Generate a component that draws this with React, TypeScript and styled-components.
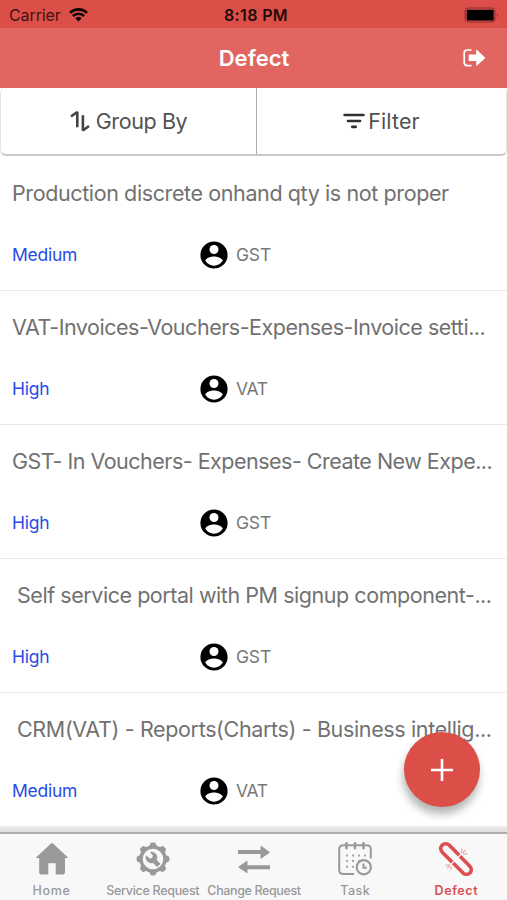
import React from 'react';
import styled, { createGlobalStyle } from 'styled-components';

const GlobalStyle = createGlobalStyle`
  * { box-sizing: border-box; }
  body { margin: 0; background: #fff; font-family: Inter, "Liberation Sans", sans-serif; }
`;

const Screen = styled.div`
  position: relative;
  display: flex;
  flex-direction: column;
  width: 507px;
  height: 900px;
  overflow: hidden;
  background: #fff;
`;

const StatusBar = styled.div`
  display: grid;
  grid-template-columns: 1fr auto 1fr;
  align-items: center;
  flex: none;
  height: 28px;
  padding: 2px 7px 0 9px;
  background: #dc4e48;
  color: #1f0a0a;
  font-size: 16px;
  line-height: 20px;
`;

const Carrier = styled.div`
  display: flex;
  align-items: center;
  gap: 8px;
  color: #3c1414;
  letter-spacing: -0.1px;
`;

const Clock = styled.div`
  padding-left: 3px;
  font-weight: 600;
  letter-spacing: 0.35px;
`;

const Battery = styled.svg`
  justify-self: end;
`;

const Header = styled.header`
  display: grid;
  grid-template-columns: 1fr auto 1fr;
  align-items: center;
  flex: none;
  height: 60px;
  padding: 0 21px;
  background: #e16662;
  color: #fff;
`;

const Title = styled.h1`
  grid-column: 2;
  margin: 0;
  padding-left: 1px;
  font-size: 22px;
  font-weight: 600;
  line-height: 28px;
`;

const IconButton = styled.button`
  justify-self: end;
  display: flex;
  padding: 0;
  border: 0;
  background: none;
  color: #fff;
`;

const Toolbar = styled.div`
  display: grid;
  grid-template-columns: 255px 1fr;
  flex: none;
  height: 68px;
  border: solid #c9c9c9;
  border-width: 0 1px 2px;
  border-color: #e4e4e4 #e4e4e4 #c9c9c9;
  border-radius: 6px;
`;

const ToolButton = styled.button<{ $gap: number; $spacing: number }>`
  display: flex;
  align-items: center;
  justify-content: center;
  gap: ${(p) => p.$gap}px;
  padding: 0;
  border: 0;
  background: none;
  color: #525252;
  font: 400 21.5px/28px Inter, sans-serif;
  letter-spacing: ${(p) => p.$spacing}px;

  & + & {
    border-left: 1.5px solid #adadad;
  }
`;

const List = styled.ul`
  flex: 1;
  min-height: 0;
  margin: 0;
  padding: 1px 0 0;
  overflow: hidden;
  list-style: none;
`;

const Item = styled.li`
  height: 134px;
  padding: 22px 12px 0;
  border-bottom: 1px solid #e9e9e9;
`;

const Summary = styled.div<{ $spacing: number; $indent?: boolean }>`
  padding-left: ${(p) => (p.$indent ? 5 : 0)}px;
  color: #717171;
  font-size: 21.5px;
  line-height: 28px;
  letter-spacing: ${(p) => p.$spacing}px;
  white-space: nowrap;
`;

const Meta = styled.div`
  display: grid;
  grid-template-columns: 188px 1fr;
  align-items: center;
  height: 32px;
  margin-top: 32px;
  font-size: 17.5px;
  line-height: 24px;
`;

const Priority = styled.span`
  color: #2a4be3;
  letter-spacing: -0.25px;
`;

const Owner = styled.span<{ $spacing: number }>`
  display: flex;
  align-items: center;
  gap: 8px;
  color: #777;
  letter-spacing: ${(p) => p.$spacing}px;
`;

const AddButton = styled.button`
  position: absolute;
  left: 404px;
  top: 732px;
  display: flex;
  align-items: center;
  justify-content: center;
  width: 76px;
  height: 75px;
  padding: 0;
  border: 0;
  border-radius: 50%;
  background: #dc4e48;
  box-shadow: -1px 7px 9px rgba(0, 0, 0, 0.3);
`;

const TabBar = styled.nav`
  display: grid;
  grid-template-columns: repeat(5, 1fr);
  flex: none;
  height: 74px;
  padding: 8px 0 0 1px;
  background: linear-gradient(#ececec 0, #e0e0e0 6px, #a9a9a9 6px, #b5b5b5 8px, #f8f8f8 8px);
`;

const Tab = styled.a<{ $active?: boolean; $spacing: number }>`
  display: flex;
  flex-direction: column;
  align-items: center;
  padding-top: 8px;
  color: ${(p) => (p.$active ? '#dc4e50' : '#999')};
  font-size: 12.5px;
  font-weight: ${(p) => (p.$active ? 600 : 500)};
  line-height: 16px;
  letter-spacing: ${(p) => p.$spacing}px;
  white-space: nowrap;

  svg {
    flex: none;
    margin-bottom: 7px;
  }
`;

const WifiIcon = () => (
  <svg width="19" height="14" viewBox="0 0 19 14" fill="none" stroke="#0c0303">
    <path d="M1 4.900a12.200 12.200 0 0 1 17 0" strokeWidth="2.700" />
    <path d="M3.900 8a8 8 0 0 1 11.200 0" strokeWidth="2.500" />
    <path d="M9.500 13.600 6.300 10.300a4.600 4.600 0 0 1 6.400 0Z" fill="#0c0303" stroke="none" />
  </svg>
);

const BatteryIcon = () => (
  <Battery width="36" height="16" viewBox="0 0 36 16">
    <rect x="1" y="1" width="30" height="14" rx="3" fill="none" stroke="#8c302d" />
    <rect x="2.700" y="2.700" width="27" height="10.800" rx="1" fill="#000" />
    <path d="M33 6v4.500q2-2.200 0-4.500" fill="#8c302d" />
  </Battery>
);

const ExitIcon = () => (
  <svg width="23" height="18" viewBox="0 0 23 18">
    <path d="M8.500 1H4.500Q1.200 1 1.200 4v9.500q0 3.200 3.300 3.200h4" fill="none" stroke="#fff" strokeWidth="1.700" />
    <path d="M6.500 5.400h6.700V1.200q0-1 .9-.3l7.700 7.300q.6.600 0 1.200l-7.700 7.200q-.9.600-.9-.3v-4.200H6.500q-.8 0-.8-.8V6.200q0-.8.8-.8" fill="#fff" />
  </svg>
);

const SortIcon = () => (
  <svg width="20" height="22" viewBox="0 0 20 22" fill="none" stroke="#444">
    <path d="M7.300 17.200V2L1 6.500" strokeWidth="2.600" strokeLinejoin="bevel" />
    <path d="M12.900 5.300v15.200L19 16" strokeWidth="2.600" strokeLinejoin="bevel" />
  </svg>
);

const FilterIcon = () => (
  <svg width="22" height="16" viewBox="0 0 22 16" stroke="#303030" strokeWidth="2.700" strokeLinecap="round">
    <path d="M1.600 2h18.800M5 8h12M9.300 13.800h3.400" />
  </svg>
);

const AvatarIcon = () => (
  <svg width="28" height="28" viewBox="0 0 28 28">
    <circle cx="14" cy="14" r="13.600" fill="#000" />
    <circle cx="14" cy="8.500" r="4.500" fill="#fff" />
    <path d="M5.200 19.600C6.500 16.800 11 15.600 14 15.600s7.500 1.200 8.800 4A10.700 10.700 0 0 1 14 24.700a10.700 10.700 0 0 1-8.800-5.100" fill="#fff" />
  </svg>
);

const PlusIcon = () => (
  <svg width="22" height="22" viewBox="0 0 22 22" stroke="#fff" strokeWidth="2.600">
    <path d="M11 0v22M0 11h22" />
  </svg>
);

const HomeIcon = () => (
  <svg width="34" height="34" viewBox="0 0 34 34" fill="#999">
    <path d="M16 1.600q1-.9 2 0l14.700 13.600q.8.900-.4.900H30v14.500q0 1.800-1.800 1.800H20.700V21.300h-7.400v11.100H6q-1.800 0-1.800-1.800V16.100H1.700q-1.200 0-.4-.9Z" />
  </svg>
);

const teeth = [0, 45, 90, 135, 180, 225, 270, 315];

const ServiceIcon = () => (
  <svg width="34" height="34" viewBox="0 0 34 34">
    <circle cx="17" cy="17" r="12" fill="none" stroke="#999" strokeWidth="3.400" />
    {teeth.map((angle) => (
      <path key={angle} d="m12.800 5.200 1.400-3.500q.4-1.100 1.500-1.100h2.600q1.100 0 1.500 1.100l1.400 3.500Z" fill="#999" transform={`rotate(${angle} 17 17)`} />
    ))}
    <path d="m17 17.500 5.800 5.800" stroke="#999" strokeWidth="4.600" />
    <path d="m10 13.300 3.700 3.100 2.500-.5.500-2.600-2.900-3.300a5.800 5.800 0 0 1 7.100 7.600l-4.700 3.600A5.900 5.900 0 0 1 10 13.300" fill="#999" />
  </svg>
);

const ChangeIcon = () => (
  <svg width="34" height="34" viewBox="0 0 34 34" fill="#999">
    <path d="M1 8.600h22.500V4.700q0-.9.800-.3l8 5.800q.7.600 0 1.200l-8 5.600q-.8.500-.8-.4v-4H1ZM33 23.800H10.500v-3.900q0-.9-.8-.3l-8 5.400q-.7.600 0 1.200l8 5.400q.8.500.8-.4v-3.500H33Z" transform="translate(0 -.5)" />
  </svg>
);

const TaskIcon = () => (
  <svg width="34" height="34" viewBox="0 0 34 34" fill="none" stroke="#999" strokeWidth="2">
    <path d="M16 32H5.500Q1.200 32 1.200 27.700V7.500q0-4.300 4.300-4.300h23q4.300 0 4.300 4.300v9" />
    <path d="M8.500 1.300v5M17 1.300v5M25.500 1.300v5" strokeWidth="2.600" strokeLinecap="round" />
    <path d="M8 13.500h2m4 0h2m4 0h2m4 0h2M8 19h2m4 0h2m4 0h2M8 24.700h2m4 0h2" stroke="#a6a6a6" />
    <circle cx="25.800" cy="25.200" r="7.100" strokeWidth="2.200" />
    <path d="M25.500 21.500v4.200H28.800" />
  </svg>
);

const DefectIcon = () => (
  <svg width="34" height="34" viewBox="0 0 34 34" fill="none" stroke="#dc4e50">
    <path d="M13.200 20.300 3.300 10.200C-1.300 4.800 5.300-1 10.500 3.400l9.700 9.800M21 14.300l9.600 9.700c4.700 5.200-1.700 11.200-6.800 6.800L14.200 21.100" strokeWidth="3.600" />
    <path d="m22.400 11 .6-4.500M24 12.200l4.500-.5M23.500 11l3-3M10.800 22.500l-4.300.8M12.200 24l-.4 4M11 23.500l-2.800 2.700" stroke="#eda9a5" strokeWidth="1.200" />
  </svg>
);

const defects = [
  { text: 'Production discrete onhand qty is not proper', spacing: -0.39, priority: 'Medium', owner: 'GST' },
  { text: 'VAT-Invoices-Vouchers-Expenses-Invoice setti...', spacing: -0.48, priority: 'High', owner: 'VAT' },
  { text: 'GST- In Vouchers- Expenses- Create New Expe...', spacing: -0.51, priority: 'High', owner: 'GST' },
  { text: 'Self service portal with PM signup component-...', spacing: -0.45, priority: 'High', owner: 'GST', indent: true },
  { text: 'CRM(VAT) - Reports(Charts) - Business intellig...', spacing: -0.36, priority: 'Medium', owner: 'VAT', indent: true },
];

const tabs = [
  { label: 'Home', Icon: HomeIcon, spacing: 0.7 },
  { label: 'Service Request', Icon: ServiceIcon, spacing: -0.3 },
  { label: 'Change Request', Icon: ChangeIcon, spacing: -0.38 },
  { label: 'Task', Icon: TaskIcon, spacing: 0.4 },
  { label: 'Defect', Icon: DefectIcon, spacing: 0.6, active: true },
];

export default function App() {
  return (
    <Screen>
      <GlobalStyle />
      <StatusBar>
        <Carrier>
          Carrier
          <WifiIcon />
        </Carrier>
        <Clock>8:18 PM</Clock>
        <BatteryIcon />
      </StatusBar>
      <Header>
        <Title>Defect</Title>
        <IconButton aria-label="Sign out">
          <ExitIcon />
        </IconButton>
      </Header>
      <Toolbar>
        <ToolButton $gap={6} $spacing={-0.4}>
          <SortIcon />
          Group By
        </ToolButton>
        <ToolButton $gap={3} $spacing={0.1}>
          <FilterIcon />
          Filter
        </ToolButton>
      </Toolbar>
      <List>
        {defects.map((d) => (
          <Item key={d.text}>
            <Summary $spacing={d.spacing} $indent={d.indent}>{d.text}</Summary>
            <Meta>
              <Priority>{d.priority}</Priority>
              <Owner $spacing={d.owner === 'VAT' ? -0.3 : -0.2}>
                <AvatarIcon />
                {d.owner}
              </Owner>
            </Meta>
          </Item>
        ))}
      </List>
      <TabBar>
        {tabs.map(({ label, Icon, spacing, active }) => (
          <Tab key={label} $spacing={spacing} $active={active}>
            <Icon />
            {label}
          </Tab>
        ))}
      </TabBar>
      <AddButton aria-label="Add defect">
        <PlusIcon />
      </AddButton>
    </Screen>
  );
}
